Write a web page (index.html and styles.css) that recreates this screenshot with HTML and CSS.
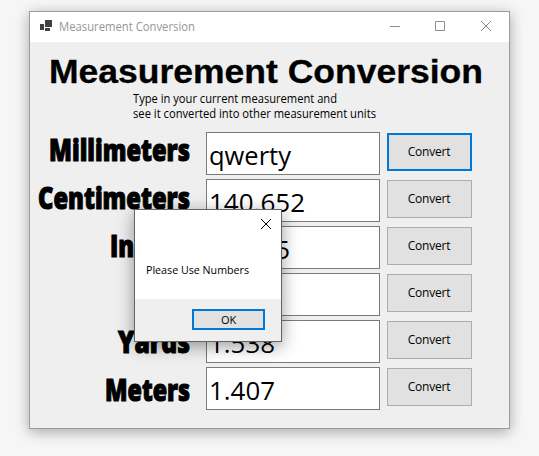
FILE: index.html
```html
<!DOCTYPE html>
<html lang="en">
<head>
<meta charset="utf-8">
<title>Measurement Conversion</title>
<link rel="stylesheet" href="styles.css">
</head>
<body>
<main class="window">
  <header class="titlebar">
    <svg class="app-icon" width="13" height="12" viewBox="0 0 13 12"><path d="M5 0h7v7H5zM0 4h4v6H0zM5 8h5v3H5z"/></svg>
    <svg class="title" width="140" height="30"><text x="0" y="19" textLength="136" lengthAdjust="spacingAndGlyphs">Measurement Conversion</text></svg>
    <svg class="controls" width="104" height="12" viewBox="0 0 104 12"><path d="M0 6.500h10M45.500 1.500h9v9h-9zM91 1l10 10M101 1l-10 10"/></svg>
  </header>
  <svg class="heading" width="479" height="50"><text x="19" y="41" textLength="434" lengthAdjust="spacingAndGlyphs">Measurement Conversion</text></svg>
  <svg class="intro" width="479" height="40">
    <text x="103" y="11" textLength="204" lengthAdjust="spacingAndGlyphs">Type in your current measurement and</text>
    <text x="103" y="26" textLength="243" lengthAdjust="spacingAndGlyphs">see it converted into other measurement units</text>
  </svg>
  <section class="converter">
    <div class="labels">
      <svg width="160" height="48"><text x="19" y="29" textLength="141" lengthAdjust="spacingAndGlyphs">Millimeters</text></svg>
      <svg width="160" height="48"><text x="8" y="29" textLength="152" lengthAdjust="spacingAndGlyphs">Centimeters</text></svg>
      <svg width="160" height="48"><text x="80" y="29" textLength="80" lengthAdjust="spacingAndGlyphs">Inches</text></svg>
      <svg width="160" height="48"><text x="107" y="29" textLength="53" lengthAdjust="spacingAndGlyphs">Feet</text></svg>
      <svg width="160" height="48"><text x="88" y="29" textLength="72" lengthAdjust="spacingAndGlyphs">Yards</text></svg>
      <svg width="160" height="48"><text x="75" y="29" textLength="85" lengthAdjust="spacingAndGlyphs">Meters</text></svg>
    </div>
    <div class="fields">
      <div class="field"><svg width="172" height="41"><text x="2" y="32" textLength="82" lengthAdjust="spacingAndGlyphs">qwerty</text></svg></div>
      <div class="field"><svg width="172" height="41"><text x="2" y="32" textLength="96" lengthAdjust="spacingAndGlyphs">140.652</text></svg></div>
      <div class="field"><svg width="172" height="41"><text x="2" y="32" textLength="81" lengthAdjust="spacingAndGlyphs">55.375</text></svg></div>
      <div class="field"></div>
      <div class="field"><svg width="172" height="41"><text x="2" y="32" textLength="66" lengthAdjust="spacingAndGlyphs">1.538</text></svg></div>
      <div class="field"><svg width="172" height="41"><text x="2" y="32" textLength="66" lengthAdjust="spacingAndGlyphs">1.407</text></svg></div>
    </div>
    <div class="buttons">
      <button class="button focused">Convert</button>
      <button class="button">Convert</button>
      <button class="button">Convert</button>
      <button class="button">Convert</button>
      <button class="button">Convert</button>
      <button class="button">Convert</button>
    </div>
  </section>
</main>
<div class="dialog" role="alertdialog">
  <div class="message">
    <svg class="close" width="10" height="10" viewBox="0 0 10 10"><path d="M0 0l10 10M10 0L0 10"/></svg>
    <svg class="message-text" width="130" height="20"><text x="0" y="14" textLength="103" lengthAdjust="spacingAndGlyphs">Please Use Numbers</text></svg>
  </div>
  <div class="actions"><button class="button ok">OK</button></div>
</div>
</body>
</html>
```
FILE: styles.css
```css
* { box-sizing: border-box; }

body {
  margin: 0;
  height: 456px;
  padding: 11px 29px 27px;
  overflow: hidden;
  background: #f6f6f6;
  color: #000;
  font: 12px "Open Sans", sans-serif;
}

svg { display: block; overflow: visible; flex: none; }

.window {
  width: 481px;
  height: 418px;
  border: 1px solid #9c9c9c;
  background: #efefef;
  box-shadow: 0 3px 13px rgba(0, 0, 0, .32);
}

.titlebar {
  display: flex;
  align-items: center;
  height: 30px;
  padding-left: 10px;
  background: #fff;
}

.app-icon { fill: #414141; margin-top: -2px; }
.title { margin-left: 6px; fill: #969696; }
.controls { margin: -2px 0 0 191px; fill: none; stroke: #8c8c8c; }

.heading {
  font: bold 33px "Liberation Sans", sans-serif;
  stroke: #000;
  stroke-width: .3px;
  stroke-linejoin: round;
}

.converter { display: flex; }

.labels {
  width: 176px;
  font: 800 30px "Open Sans", sans-serif;
  stroke: #000;
  stroke-width: 1.1px;
}

.fields { display: grid; gap: 4px; align-content: start; }

.field {
  width: 174px;
  height: 43px;
  border: 1px solid #7a7a7a;
  background: #fff;
  font-size: 26px;
}

.buttons {
  display: grid;
  gap: 9px;
  align-content: start;
  padding: 1px 0 0 7px;
}

.button {
  width: 85px;
  height: 38px;
  padding: 0 1px 1px 0;
  border: 1px solid #adadad;
  background: #e1e1e1;
  color: #000;
  font: 12px "Open Sans", sans-serif;
  letter-spacing: -.2px;
}

.button.focused, .button.ok { border: 2px solid #0078d7; }

.dialog {
  position: absolute;
  left: 134px;
  top: 209px;
  width: 148px;
  height: 133px;
  border: 1px solid #636363;
  background: #fff;
  box-shadow: 0 4px 16px rgba(0, 0, 0, .4);
}

.message { height: 89px; padding: 9px 10px 0 11px; }
.close { margin-left: auto; stroke: #000; }
.message-text { margin-top: 31px; font-size: 11px; }

.actions {
  display: flex;
  justify-content: flex-end;
  height: 42px;
  padding: 10px 16px 0 0;
  background: #efefef;
}

.button.ok { width: 73px; height: 21px; padding: 0; font-size: 11px; line-height: 17px; }
```
